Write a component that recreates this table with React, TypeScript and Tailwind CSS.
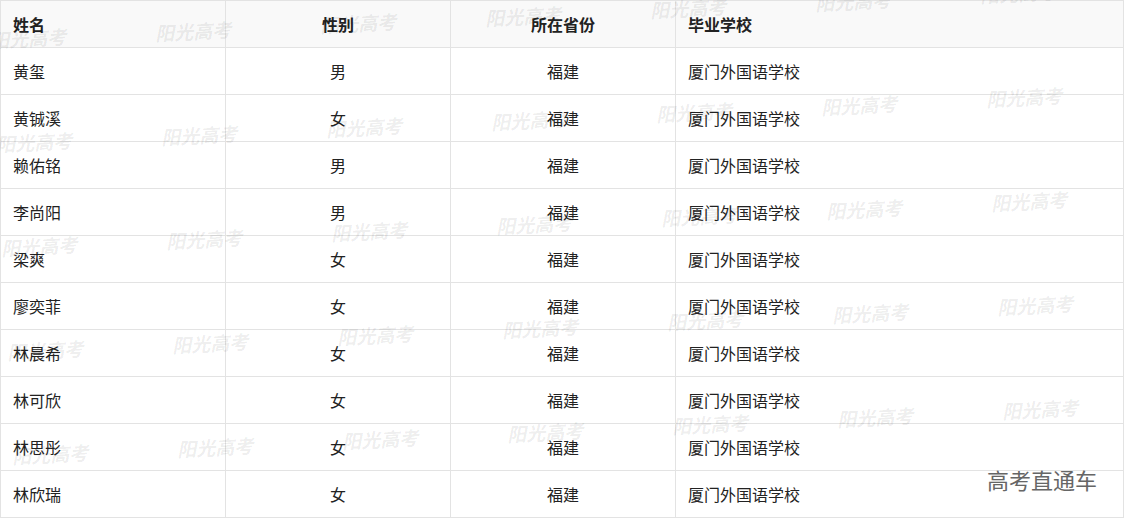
const rows = [
  { name: '黄玺', sex: '男' },
  { name: '黄铖溪', sex: '女' },
  { name: '赖佑铭', sex: '男' },
  { name: '李尚阳', sex: '男' },
  { name: '梁爽', sex: '女' },
  { name: '廖奕菲', sex: '女' },
  { name: '林晨希', sex: '女' },
  { name: '林可欣', sex: '女' },
  { name: '林思彤', sex: '女' },
  { name: '林欣瑞', sex: '女' },
];

const cjk = "font-['Noto_Sans_CJK_SC','Noto_Sans',sans-serif]";

function Watermarks() {
  const marks: { key: string; left: number; top: number }[] = [];
  for (let r = 0; r < 5; r++) {
    for (let c = 0; c < 7; c++) {
      marks.push({
        key: `${r}-${c}`,
        left: -10 + 5.5 * r + 165 * c,
        top: 38 + 104 * r - 7.5 * c - 13,
      });
    }
  }
  return (
    <div className="pointer-events-none absolute inset-0">
      {marks.map((m) => (
        <span
          key={m.key}
          className={`absolute -rotate-3 whitespace-nowrap text-[19px] font-bold italic leading-[26px] text-black/[0.08] ${cjk}`}
          style={{ left: m.left, top: m.top }}
        >
          阳光高考
        </span>
      ))}
    </div>
  );
}

export default function App() {
  return (
    <div className={`relative h-[518px] w-[1125px] overflow-hidden bg-white text-[16px] text-[#222222] ${cjk}`}>
      <div className="w-[1124px] border-l border-t border-[#e3e3e3]">
        <div className="flex h-[47px] bg-[#f9f9f9] font-bold">
          <div className="flex w-[225px] items-center border-b border-r border-[#e3e3e3] pl-[12px]">姓名</div>
          <div className="flex w-[225px] items-center justify-center border-b border-r border-[#e3e3e3]">性别</div>
          <div className="flex w-[225px] items-center justify-center border-b border-r border-[#e3e3e3]">所在省份</div>
          <div className="flex w-[448px] items-center border-b border-r border-[#e3e3e3] pl-[12px]">毕业学校</div>
        </div>
        {rows.map((row) => (
          <div key={row.name} className="flex h-[47px]">
            <div className="flex w-[225px] items-center border-b border-r border-[#e3e3e3] pl-[12px]">{row.name}</div>
            <div className="flex w-[225px] items-center justify-center border-b border-r border-[#e3e3e3]">{row.sex}</div>
            <div className="flex w-[225px] items-center justify-center border-b border-r border-[#e3e3e3]">福建</div>
            <div className="flex w-[448px] items-center border-b border-r border-[#e3e3e3] pl-[12px]">厦门外国语学校</div>
          </div>
        ))}
      </div>
      <Watermarks />
      <span className="absolute right-[28px] top-[468px] text-[22px] leading-[22px] text-[#666666]">高考直通车</span>
    </div>
  );
}
